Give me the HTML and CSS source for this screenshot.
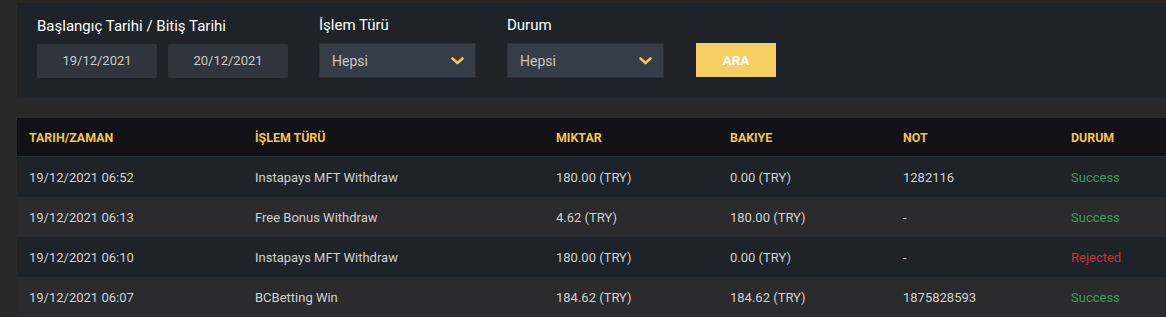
FILE: index.html
```html
<!DOCTYPE html>
<html lang="tr">
<head>
    <meta charset="UTF-8">
    <title>Hesap Hareketleri</title>
    <link rel="stylesheet" href="styles.css">
</head>
<body>
    <div class="page">
        <form class="filters">
            <div class="field">
                <label>Başlangıç Tarihi / Bitiş Tarihi</label>
                <div class="dates">
                    <div class="date">19/12/2021</div>
                    <div class="date">20/12/2021</div>
                </div>
            </div>

            <div class="field">
                <label>İşlem Türü</label>
                <div class="select">
                    <span>Hepsi</span>
                    <svg width="13" height="8" viewBox="0 0 13 8"><path d="M1.5 1.5 L6.5 6 L11.5 1.5" fill="none" stroke="#f5c543" stroke-width="2.6" stroke-linecap="round" stroke-linejoin="round"/></svg>
                </div>
            </div>

            <div class="field">
                <label>Durum</label>
                <div class="select">
                    <span>Hepsi</span>
                    <svg width="13" height="8" viewBox="0 0 13 8"><path d="M1.5 1.5 L6.5 6 L11.5 1.5" fill="none" stroke="#f5c543" stroke-width="2.6" stroke-linecap="round" stroke-linejoin="round"/></svg>
                </div>
            </div>

            <button type="button" class="search">ARA</button>
        </form>

        <div class="table-wrap">
            <table class="history">
                <colgroup>
                    <col style="width: 226px">
                    <col style="width: 301px">
                    <col style="width: 174px">
                    <col style="width: 173px">
                    <col style="width: 168px">
                    <col>
                </colgroup>
                <thead>
                    <tr>
                        <th>TARIH/ZAMAN</th>
                        <th>İŞLEM TÜRÜ</th>
                        <th>MIKTAR</th>
                        <th>BAKIYE</th>
                        <th>NOT</th>
                        <th>DURUM</th>
                    </tr>
                </thead>
                <tbody>
                    <tr>
                        <td>19/12/2021 06:52</td>
                        <td>Instapays MFT Withdraw</td>
                        <td>180.00 (TRY)</td>
                        <td>0.00 (TRY)</td>
                        <td>1282116</td>
                        <td class="ok">Success</td>
                    </tr>
                    <tr>
                        <td>19/12/2021 06:13</td>
                        <td>Free Bonus Withdraw</td>
                        <td>4.62 (TRY)</td>
                        <td>180.00 (TRY)</td>
                        <td>-</td>
                        <td class="ok">Success</td>
                    </tr>
                    <tr>
                        <td>19/12/2021 06:10</td>
                        <td>Instapays MFT Withdraw</td>
                        <td>180.00 (TRY)</td>
                        <td>0.00 (TRY)</td>
                        <td>-</td>
                        <td class="fail">Rejected</td>
                    </tr>
                    <tr>
                        <td>19/12/2021 06:07</td>
                        <td>BCBetting Win</td>
                        <td>184.62 (TRY)</td>
                        <td>184.62 (TRY)</td>
                        <td>1875828593</td>
                        <td class="ok">Success</td>
                    </tr>
                </tbody>
            </table>
        </div>
    </div>
</body>
</html>
```

FILE: styles.css
```css
body {
    margin: 0;
    background: #282828;
    font-family: Roboto, 'Liberation Sans', sans-serif;
    color: #d2d2d2;
    overflow: hidden;
}

.page {
    padding: 3px 0 0 17px;
}

.filters {
    display: flex;
    align-items: flex-end;
    gap: 31px;
    background: #1e232a;
    padding: 13px 20px 20px;
    margin: 0;
}

.field label {
    display: block;
    font-size: 15px;
    line-height: 18px;
    color: #ffffff;
    margin-bottom: 9px;
}

.dates {
    display: flex;
    gap: 11px;
}

.date {
    width: 120px;
    height: 34px;
    line-height: 34px;
    text-align: center;
    font-size: 13px;
    color: #c9c9c9;
    background: #2f353d;
    border-radius: 2px;
}

.select {
    width: 157px;
    height: 35px;
    box-sizing: border-box;
    display: flex;
    align-items: center;
    justify-content: space-between;
    padding: 0 11px 0 12px;
    background: #353d47;
    border: 1px solid #2a3038;
    font-size: 14px;
    color: #c6c6c6;
}

.search {
    width: 80px;
    height: 34px;
    margin-left: 1px;
    margin-bottom: 1px;
    border: none;
    background: #f6cf63;
    color: #ffffff;
    font-family: inherit;
    font-weight: bold;
    font-size: 13.5px;
    cursor: pointer;
}

.table-wrap {
    margin-top: 20px;
}

.history {
    width: 1200px;
    table-layout: fixed;
    border-collapse: collapse;
    font-size: 13px;
}

.history th {
    height: 38px;
    padding: 0 0 0 12px;
    text-align: left;
    background: #121216;
    color: #f5c543;
    font-size: 12.4px;
    font-weight: bold;
    border-bottom: 1px solid #262c34;
}

.history td {
    height: 40px;
    padding: 0 0 0 12px;
    color: #d0d0d0;
}

.history tbody tr:nth-child(odd) {
    background: #1e232a;
}

.history tbody tr:nth-child(even) {
    background: #2b2b2d;
}

.history td.ok {
    color: #3d9d57;
}

.history td.fail {
    color: #cf3131;
}
```
